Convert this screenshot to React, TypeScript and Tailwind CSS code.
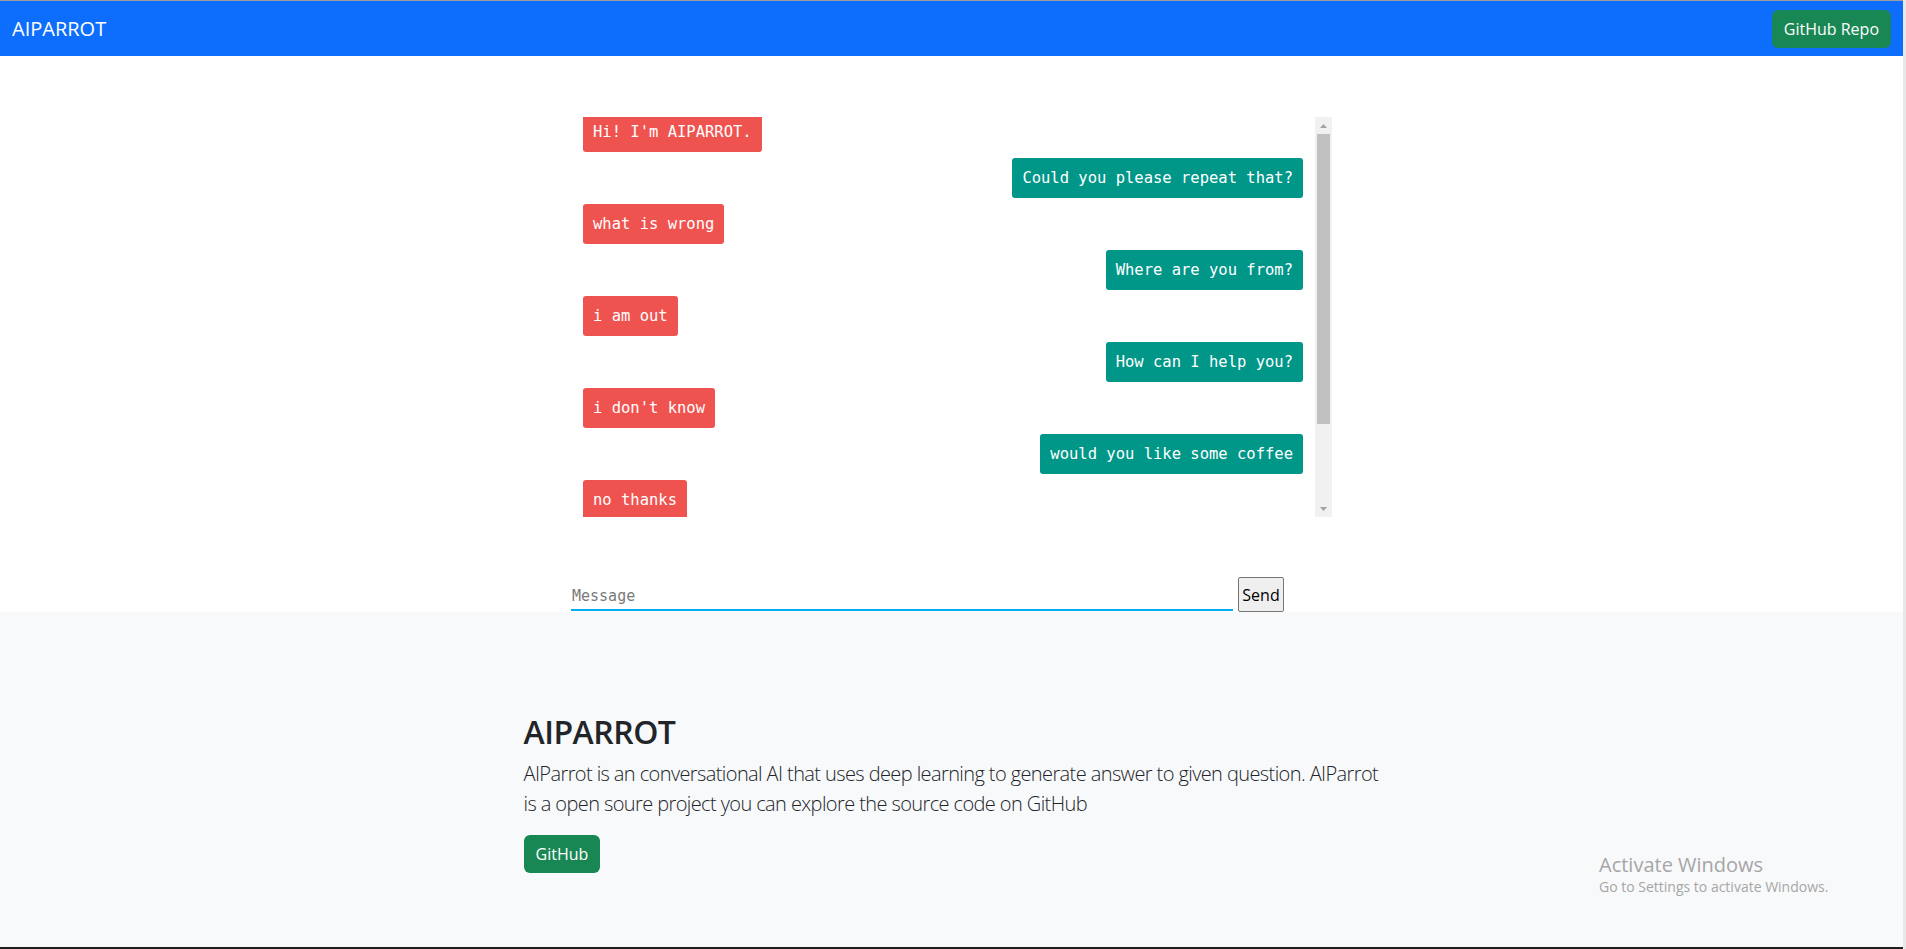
import React from "react";

const SANS = "font-['Open_Sans','Noto_Sans',sans-serif]";
const MONO = "font-['DejaVu_Sans_Mono','Liberation_Mono',monospace]";

type Msg = { from: "bot" | "me"; text: string };

const MESSAGES: Msg[] = [
  { from: "bot", text: "Hi! I'm AIPARROT." },
  { from: "me", text: "Could you please repeat that?" },
  { from: "bot", text: "what is wrong" },
  { from: "me", text: "Where are you from?" },
  { from: "bot", text: "i am out" },
  { from: "me", text: "How can I help you?" },
  { from: "bot", text: "i don't know" },
  { from: "me", text: "would you like some coffee" },
  { from: "bot", text: "no thanks" },
];

function Arrow({ down }: { down?: boolean }) {
  return (
    <div className="flex h-[17px] w-[17px] items-center justify-center">
      <svg width="7" height="4" viewBox="0 0 7 4">
        {down ? (
          <polygon points="0,0 7,0 3.5,4" fill="#a3a3a3" />
        ) : (
          <polygon points="0,4 7,4 3.5,0" fill="#a3a3a3" />
        )}
      </svg>
    </div>
  );
}

function ChatBox() {
  return (
    <div className="flex h-[400px] w-[761px]">
      <div className="min-w-0 flex-1 overflow-hidden px-[12px]">
        <ul className="-mt-[5px] flex flex-col gap-[6px]">
          {MESSAGES.map((m, i) => (
            <li
              key={i}
              className={`flex h-[40px] items-center rounded-[3px] px-[10px] pt-[2px] text-[15.5px] text-white ${MONO} ${
                m.from === "bot"
                  ? "self-start bg-[#ef5350]"
                  : "self-end bg-[#009688]"
              }`}
            >
              <span className="whitespace-pre">{m.text}</span>
            </li>
          ))}
        </ul>
      </div>
      <div className="flex w-[17px] flex-col bg-[#f1f1f1]">
        <Arrow />
        <div className="flex-1">
          <div className="mx-auto h-[290px] w-[13px] bg-[#c1c1c1]" />
        </div>
        <Arrow down />
      </div>
    </div>
  );
}

export default function App() {
  return (
    <div className="relative flex h-[949px] w-[1906px] overflow-hidden bg-white">
      <div className="flex w-[1903px] flex-col border-t border-[#9e9e9e]">
        <nav className="flex h-[55px] items-center justify-between bg-[#0d6efd] px-[12px]">
          <span className={`text-[20px] text-white ${SANS}`}>AIPARROT</span>
          <button
            type="button"
            className={`h-[38px] rounded-[6px] bg-[#198754] px-[12px] text-[16px] text-white ${SANS}`}
          >
            GitHub Repo
          </button>
        </nav>

        <section className="flex flex-col items-center pt-[61px]">
          <ChatBox />
          <div className="mt-[60px] flex w-[761px] items-start gap-[5px]">
            <input
              placeholder="Message"
              className={`h-[34px] w-[662px] border-b-2 border-[#00acf5] px-[1px] pt-[6px] text-[15px] outline-none placeholder:text-[#7a7a7a] ${MONO}`}
            />
            <button
              type="button"
              className={`h-[35px] w-[46px] rounded-[2px] border border-[#767676] bg-[#efefef] text-[16px] text-black ${SANS}`}
            >
              Send
            </button>
          </div>
        </section>

        <footer className="flex flex-1 justify-center bg-[#f8f9fa] pt-[101px]">
          <div className={`w-[856px] text-[#212529] ${SANS}`}>
            <h2 className="mb-[8px] text-[32px] leading-[1.2] font-semibold tracking-[-0.5px]">
              AIPARROT
            </h2>
            <p className="mb-[16px] text-[20px] leading-[30px] font-light tracking-[-0.6px]">
              AIParrot is an conversational AI that uses deep learning to generate answer to given
              question. AIParrot is a open soure project you can explore the source code on GitHub
            </p>
            <button
              type="button"
              className="h-[38px] rounded-[6px] bg-[#198754] px-[12px] text-[16px] text-white"
            >
              GitHub
            </button>
          </div>
        </footer>
        <div className="h-[2px] bg-[#1f1f1f]" />
      </div>
      <div className="w-[3px] bg-[#e8e8e8]" />

      <div className={`pointer-events-none absolute left-[1599px] top-[852px] text-[#a6a6a6] ${SANS}`}>
        <div className="text-[20px] leading-[26px]">Activate Windows</div>
        <div className="text-[14px] leading-[18px]">Go to Settings to activate Windows.</div>
      </div>
    </div>
  );
}
